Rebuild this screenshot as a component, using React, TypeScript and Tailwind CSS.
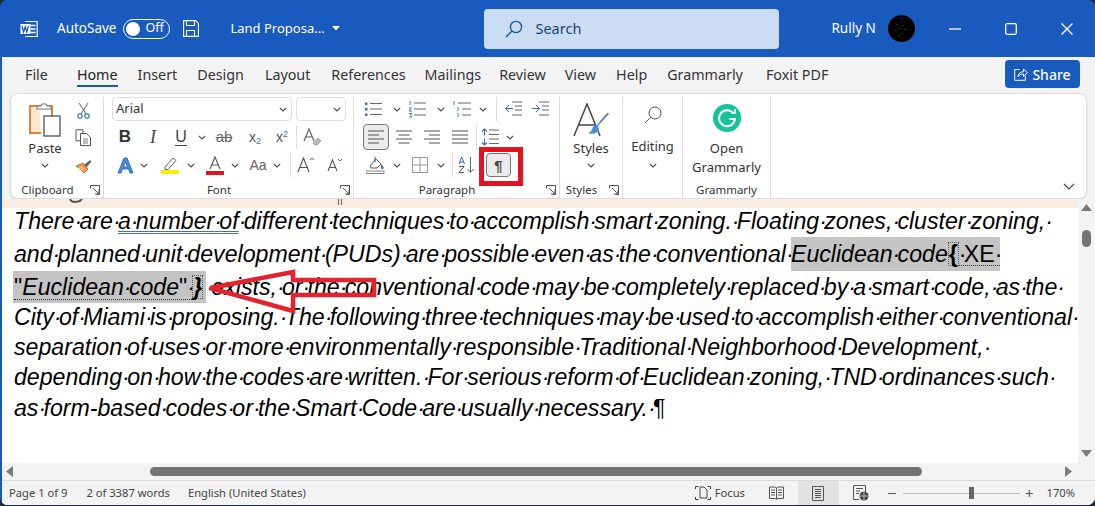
import React from "react";

const Chev = ({ c = "#444" }: { c?: string }) => (
  <svg width="8" height="5" viewBox="0 0 8 5"><path d="M.8.8 4 4l3.2-3.2" fill="none" stroke={c} strokeWidth="1.1" /></svg>
);

const Launcher = () => (
  <svg width="10" height="10" viewBox="0 0 10 10" fill="none" stroke="#555"><path d="M.5 3.5v-3h9v9h-3M3 3l6 6M9 5v4H5" strokeWidth="1" /></svg>
);

const Slot = ({ w, children }: { w: string; children?: React.ReactNode }) => (
  <div className={`flex h-full shrink-0 items-center justify-center ${w}`}>{children}</div>
);

const Sep = ({ m }: { m: string }) => <div className={`h-[24px] w-px shrink-0 bg-[#dcdcdc] ${m}`} />;

const Lines = ({ d }: { d: string }) => (
  <svg width="20" height="18" viewBox="0 0 20 18"><path d={d} fill="none" stroke="#555" strokeWidth="1.2" /></svg>
);

const GroupLabel = ({ label }: { label: string }) => (
  <div className="flex h-[18px] items-center pr-[3px]">
    <span className="flex-1 text-center text-[11.5px] leading-none text-[#333]">{label}</span>
    <div className="flex w-[16px] justify-end"><Launcher /></div>
  </div>
);

// show formatting marks: the dot takes the width of a space, not its own
const Marks = ({ t }: { t: string }) => (
  <>
    {t.split("·").map((w, i) => (
      <React.Fragment key={i}>
        {i > 0 && <span className="tracking-[-2.7px]">·</span>}
        {w}
      </React.Fragment>
    ))}
  </>
);

function TitleBar() {
  return (
    <div className="flex h-[57px] items-center bg-[#185abd] text-white">
      <svg className="ml-[20px] shrink-0" width="18" height="18" viewBox="0 0 18 18">
        <path d="M5 1.5h12.2v15H5" fill="none" stroke="#fff" strokeWidth="1.2" />
        <path d="M10.5 5.5h5M10.5 9h5M10.5 12.5h5" stroke="#fff" strokeWidth="1.4" />
        <rect x="0.5" y="4" width="10" height="10" fill="#fff" />
        <path d="M2 6l1.6 6 1.6-5 1.6 5L8.4 6" fill="none" stroke="#185abd" strokeWidth="1.3" />
      </svg>
      <span className="ml-[19px] text-[13.5px]">AutoSave</span>
      <div className="ml-[7px] flex h-[20px] w-[47px] items-center rounded-full border border-white pl-[2px]">
        <span className="size-[14px] rounded-full bg-white" />
        <span className="ml-[5px] text-[12.5px] leading-none">Off</span>
      </div>
      <svg className="ml-[13px] shrink-0" width="16" height="17" viewBox="0 0 16 17" fill="none" stroke="#fff" strokeWidth="1.1">
        <path d="M.6.6h12l2.8 2.8v13H.6zM3.5.8v4.7h8V.8M3.5 16v-5.5h8V16" />
      </svg>
      <span className="ml-[31px] w-[94px] whitespace-nowrap text-[13px]">Land Proposa...</span>
      <svg className="ml-[8px]" width="8" height="5" viewBox="0 0 8 5"><path d="M0 0h8L4 4.5z" fill="#fff" /></svg>
      <div className="ml-[144px] flex h-[40px] w-[295px] items-center rounded-[4px] bg-[#c9dcf2] text-[#21416f]">
        <svg className="ml-[21px]" width="18" height="18" viewBox="0 0 18 18" fill="none" stroke="#1f4f91" strokeWidth="1.3">
          <circle cx="11" cy="7" r="5.6" /><path d="M7 11l-6 6" />
        </svg>
        <span className="ml-[12px] text-[14.5px]">Search</span>
      </div>
      <span className="ml-[52px] text-[13.5px]">Rully N</span>
      <svg className="ml-[12px] shrink-0" width="27" height="27" viewBox="0 0 27 27">
        <circle cx="13.5" cy="13.5" r="13.5" fill="#000" />
        <path d="M13 3v1M9 9v1M15 10v1M12 13v1M17 14v1M8 15v1M14 18v1M11 20v1" stroke="#777" strokeWidth=".8" />
      </svg>
      <svg className="ml-[34px] shrink-0" width="12" height="2" viewBox="0 0 12 2"><path d="M0 1h12" stroke="#fff" strokeWidth="1.3" /></svg>
      <svg className="ml-[44px] shrink-0" width="12" height="12" viewBox="0 0 12 12"><rect x=".7" y=".7" width="10.6" height="10.6" rx="1.5" fill="none" stroke="#fff" strokeWidth="1.3" /></svg>
      <svg className="ml-[44px] shrink-0" width="12" height="12" viewBox="0 0 12 12"><path d="M.5.5l11 11M11.5.5l-11 11" stroke="#fff" strokeWidth="1.4" /></svg>
    </div>
  );
}

function TabRow() {
  return (
    <div className="flex h-[36px] items-start text-[14.3px] text-[#333]">
      <div className="ml-[23px] mt-[7px]">File</div>
      <div className="ml-[29px] mt-[7px] border-b-[2px] border-[#185abd] text-[#222]">Home</div>
      <div className="ml-[20px] mt-[7px]">Insert</div>
      <div className="ml-[20px] mt-[7px]">Design</div>
      <div className="ml-[21px] mt-[7px]">Layout</div>
      <div className="ml-[21px] mt-[7px]">References</div>
      <div className="ml-[19px] mt-[7px]">Mailings</div>
      <div className="ml-[18px] mt-[7px]">Review</div>
      <div className="ml-[19px] mt-[7px]">View</div>
      <div className="ml-[20px] mt-[7px]">Help</div>
      <div className="ml-[20px] mt-[7px]">Grammarly</div>
      <div className="ml-[23px] mt-[7px]">Foxit PDF</div>
      <div className="ml-auto mr-[15px] mt-[3px] flex h-[28px] w-[75px] items-center justify-center gap-[4px] rounded-[4px] bg-[#185abd] text-[14px] font-medium text-white">
        <svg width="14" height="14" viewBox="0 0 14 14" fill="none" stroke="#fff" strokeWidth="1"><path d="M5.5 2.5H.7v10.8h10.6V8.5M4 9.5c.3-3 2.5-4.8 5.5-4.8V2l4 3.7-4 3.7V7C7 7 5 8 4 9.500z" /></svg>
        Share
      </div>
    </div>
  );
}

function Clipboard() {
  return (
    <div className="w-[93px] shrink-0 border-r border-[#dcdcdc]">
      <div className="flex h-[84px]">
        <div className="ml-[9px] flex w-[50px] shrink-0 flex-col items-center pt-[5px]">
          <svg width="34" height="36" viewBox="0 0 34 36">
            <path d="M11 4h-9v27h11" fill="#fbe7d0" stroke="#d9823a" strokeWidth="2" />
            <path d="M11 4h13v10" fill="none" stroke="#d9823a" strokeWidth="2" />
            <path d="M9 7V4h4c0-3 6-3 6 0h4v3z" fill="#fff" stroke="#777" strokeWidth="1.1" />
            <rect x="16" y="14" width="16" height="20" fill="#fff" stroke="#444" strokeWidth="1.2" />
          </svg>
          <span className="text-[13px] leading-[20px] text-[#333]">Paste</span>
          <div className="mt-[5px] flex"><Chev /></div>
        </div>
        <div className="flex w-[26px] shrink-0 flex-col">
          <div className="flex h-[26px] items-center justify-center">
            <svg width="13" height="17" viewBox="0 0 13 17" fill="none"><path d="M2 1l7 11M11 1L4 12" stroke="#666" strokeWidth="1" /><circle cx="3" cy="14" r="2.2" stroke="#3b78b5" strokeWidth="1.2" /><circle cx="10" cy="14" r="2.2" stroke="#3b78b5" strokeWidth="1.2" /></svg>
          </div>
          <div className="mt-px flex h-[26px] items-center justify-center">
            <svg width="17" height="17" viewBox="0 0 17 17" fill="none" stroke="#555" strokeWidth="1"><path d="M1 .8h7v11H1z" /><path d="M5.500 4.500h6l4 4v8h-10z" fill="#fff" /><path d="M8 10h5M8 12h5M8 14h5" strokeWidth=".8" /></svg>
          </div>
          <div className="mt-[3px] flex h-[26px] items-center justify-center">
            <svg width="17" height="15" viewBox="0 0 17 15"><path d="M1 7l7-3 5 6-4 4z" fill="#ee9b52" stroke="#b8631f" strokeWidth=".8" /><path d="M3 10l4-2M5 12l4-3" stroke="#fff" strokeWidth=".8" /><path d="M9 6l6-5 1.500 1.500-5 6z" fill="#666" /></svg>
          </div>
        </div>
      </div>
      <GroupLabel label="Clipboard" />
    </div>
  );
}

function FontGroup() {
  return (
    <div className="w-[250px] shrink-0 border-r border-[#dcdcdc]">
      <div className="h-[84px]">
        <div className="ml-[8px] flex h-[24px] gap-[4px]">
          <div className="flex w-[180px] items-center justify-between rounded-[4px] border border-[#dedede] pl-[3px] pr-[4px] text-[13px] text-[#333]">
            Arial <Chev />
          </div>
          <div className="flex w-[50px] items-center justify-end rounded-[4px] border border-[#dedede] pr-[4px]"><Chev /></div>
        </div>
        <div className="mt-[3px] flex h-[26px] items-center pl-[7px] text-[#444]">
          <Slot w="w-[28px]"><span className="font-['Liberation_Sans',sans-serif] text-[17px] font-bold text-[#333]">B</span></Slot>
          <Slot w="w-[28px]"><span className="font-['Liberation_Serif',serif] text-[18px] italic">I</span></Slot>
          <Slot w="w-[28px]"><span className="border-b border-[#444] font-['Liberation_Sans',sans-serif] text-[16px] leading-[17px]">U</span></Slot>
          <Slot w="w-[14px]"><Chev /></Slot>
          <Slot w="w-[30px]"><span className="font-['Liberation_Sans',sans-serif] text-[15px] text-[#666] line-through">ab</span></Slot>
          <Slot w="w-[32px]"><span className="font-['Liberation_Sans',sans-serif] text-[14px] text-[#555]">x<sub className="text-[9px] text-[#3b78b5]">2</sub></span></Slot>
          <Slot w="w-[22px]"><span className="font-['Liberation_Sans',sans-serif] text-[14px] text-[#555]">x<sup className="text-[9px] text-[#3b78b5]">2</sup></span></Slot>
          <Sep m="ml-[3px]" />
          <Slot w="w-[30px]">
            <svg width="19" height="19" viewBox="0 0 19 19"><path d="M1 13L6 1l5 12M3 9h6" fill="none" stroke="#555" strokeWidth="1.1" /><path d="M10 15l5-5 3 3-4 4h-2z" fill="#bbb" stroke="#888" strokeWidth=".6" /></svg>
          </Slot>
        </div>
        <div className="mt-[2px] flex h-[26px] items-center pl-[7px]">
          <Slot w="w-[28px]">
            <svg width="17" height="17" viewBox="0 0 17 17"><path d="M1 16L7 1h3l6 15h-3l-1.500-4h-6L4 16zM6.500 10h4L8.500 4.500z" fill="#4a90d9" stroke="#1f5da8" strokeWidth=".8" /></svg>
          </Slot>
          <Slot w="w-[10px]"><Chev /></Slot>
          <div className="ml-[6px] flex h-full"><Slot w="w-[30px]">
            <svg width="20" height="18" viewBox="0 0 20 18"><path d="M5 11l8-9 3 2.500-8 9H5z" fill="#fff" stroke="#666" /><rect x="1" y="14" width="18" height="4" fill="#f6f000" /></svg>
          </Slot></div>
          <Slot w="w-[12px]"><Chev /></Slot>
          <div className="ml-[3px] flex h-full"><Slot w="w-[30px]">
            <svg width="18" height="19" viewBox="0 0 18 19"><path d="M4 13L9 1l5 12M5.500 9h7" fill="none" stroke="#555" strokeWidth="1.1" /><rect y="15" width="18" height="4" fill="#e0161e" /></svg>
          </Slot></div>
          <Slot w="w-[10px]"><Chev /></Slot>
          <div className="ml-[3px] flex h-full"><Slot w="w-[30px]"><span className="font-['Liberation_Sans',sans-serif] text-[14px] text-[#666]">Aa</span></Slot></div>
          <Slot w="w-[8px]"><Chev /></Slot>
          <Sep m="ml-[9px]" />
          <Slot w="w-[30px]">
            <svg width="18" height="16" viewBox="0 0 18 16"><path d="M1 15L6.500 1 12 15M3 10.500h7" fill="none" stroke="#555" strokeWidth="1.1" /><path d="M13 3l2-2 2 2" fill="none" stroke="#3b78b5" /></svg>
          </Slot>
          <Slot w="w-[28px]">
            <svg width="16" height="14" viewBox="0 0 16 14"><path d="M1 13L5.500 2 10 13M2.500 9.500h6" fill="none" stroke="#555" strokeWidth="1.1" /><path d="M11 1l2 2 2-2" fill="none" stroke="#3b78b5" /></svg>
          </Slot>
        </div>
      </div>
      <GroupLabel label="Font" />
    </div>
  );
}

function ParagraphGroup() {
  return (
    <div className="w-[206px] shrink-0 border-r border-[#dcdcdc]">
      <div className="h-[84px]">
        <div className="flex h-[24px] items-center pl-[7px]">
          <Slot w="w-[24px]">
            <svg width="18" height="16" viewBox="0 0 18 16"><path d="M6 2.500h12M6 8h12M6 13.500h12" stroke="#666" strokeWidth="1" /><path d="M1 1.500h2.500V4H1zM1 7h2.500v2.500H1zM1 12.500h2.500V15H1z" fill="#2f6fb5" /></svg>
          </Slot>
          <div className="ml-[4px] flex h-full"><Slot w="w-[16px]"><Chev /></Slot></div>
          <Slot w="w-[24px]">
            <svg width="18" height="18" viewBox="0 0 18 18"><path d="M6 3h12M6 9h12M6 15h12" stroke="#666" strokeWidth="1" /><path d="M2 1v4M1 8h2.500L1 11h3M1 13.500h3l-1.500 1.500L4 17H1" fill="none" stroke="#2f6fb5" strokeWidth=".9" /></svg>
          </Slot>
          <div className="ml-[6px] flex h-full"><Slot w="w-[12px]"><Chev /></Slot></div>
          <div className="ml-[3px] flex h-full"><Slot w="w-[24px]">
            <svg width="18" height="18" viewBox="0 0 18 18"><path d="M5 3h13M9 9h9M9 15h9" stroke="#666" strokeWidth="1" /><path d="M1 1v4M5 7v4M5 13v4" stroke="#2f6fb5" strokeWidth=".9" /></svg>
          </Slot></div>
          <div className="ml-[3px] flex h-full"><Slot w="w-[12px]"><Chev /></Slot></div>
          <Sep m="ml-[7px]" />
          <div className="ml-[4px] flex h-full"><Slot w="w-[24px]">
            <svg width="18" height="16" viewBox="0 0 18 16"><path d="M8 1h10M11 5h7M11 9h7M8 14h10" stroke="#666" strokeWidth="1" /><path d="M9 7.500H1.500M5 4L1.500 7.500 5 11" fill="none" stroke="#2f6fb5" strokeWidth="1" /></svg>
          </Slot></div>
          <div className="ml-[3px] flex h-full"><Slot w="w-[24px]">
            <svg width="18" height="16" viewBox="0 0 18 16"><path d="M8 1h10M11 5h7M11 9h7M8 14h10" stroke="#666" strokeWidth="1" /><path d="M1 7.500h7.500M5 4l3.500 3.500L5 11" fill="none" stroke="#2f6fb5" strokeWidth="1" /></svg>
          </Slot></div>
        </div>
        <div className="mt-[3px] flex h-[26px] items-center pl-[9px]">
          <div className="flex h-[26px] w-[26px] shrink-0 items-center justify-center rounded-[4px] border border-[#777] bg-[#ececec]">
            <Lines d="M2 3h16M2 7h11M2 11h16M2 15h11" />
          </div>
          <div className="ml-px flex h-full"><Slot w="w-[28px]"><Lines d="M2 3h16M4.500 7h11M2 11h16M4.500 15h11" /></Slot></div>
          <Slot w="w-[28px]"><Lines d="M2 3h16M7 7h11M2 11h16M7 15h11" /></Slot>
          <Slot w="w-[28px]"><Lines d="M2 3h16M2 7h16M2 11h16M2 15h16" /></Slot>
          <Sep m="ml-[2px]" />
          <div className="ml-px flex h-full"><Slot w="w-[24px]">
            <svg width="18" height="18" viewBox="0 0 18 18"><path d="M8 2h10M8 6.500h10M8 11h10M8 15.500h10" stroke="#666" strokeWidth="1" /><path d="M3.500 1v6.500M1 3.500L3.500 1 6 3.500M3.500 10.500V17M1 14.500L3.500 17 6 14.500" fill="none" stroke="#2f6fb5" strokeWidth="1.100" /></svg>
          </Slot></div>
          <div className="ml-[2px] flex h-full"><Slot w="w-[12px]"><Chev /></Slot></div>
        </div>
        <div className="mt-[2px] flex h-[26px] items-center pl-[7px]">
          <Slot w="w-[28px]">
            <svg width="19" height="18" viewBox="0 0 19 18"><path d="M4 10l6-7 5 5-4 4H5z" fill="#fff" stroke="#555" /><path d="M9 1v5" stroke="#555" /><path d="M15 8c2 2 3 3 2.500 4.500S15 13 15 11.500z" fill="#2f6fb5" /><path d="M0 15h18v2.500H0z" fill="#fff" stroke="#777" strokeWidth=".9" /></svg>
          </Slot>
          <div className="ml-[2px] flex h-full"><Slot w="w-[12px]"><Chev /></Slot></div>
          <div className="ml-[3px] flex h-full"><Slot w="w-[28px]">
            <svg width="16" height="16" viewBox="0 0 16 16" fill="none" stroke="#999" strokeWidth="1"><path d="M.5.500h15v15H.500zM8 .5v15M.5 8h15" /></svg>
          </Slot></div>
          <div className="ml-px flex h-full"><Slot w="w-[12px]"><Chev /></Slot></div>
          <Sep m="ml-[5px]" />
          <Slot w="w-[26px]">
            <svg width="17" height="18" viewBox="0 0 17 18"><path d="M1 8l2.700-7L6.500 8M1.800 6h4" fill="none" stroke="#2f6fb5" strokeWidth="1" /><path d="M1 10.500h5L1 16.500h5" fill="none" stroke="#555" strokeWidth="1" /><path d="M12.500 1v15M9.500 13l3 3.500 3-3.500" fill="none" stroke="#666" strokeWidth="1" /></svg>
          </Slot>
          <div className="mt-[3px] h-[39px] w-[44px] shrink-0 border-[5px] border-[#e3141f] pl-[2px] pt-px">
            <div className="flex h-[24px] w-[25px] items-center justify-center rounded-[4px] border border-[#777] bg-[#ececec] font-['Liberation_Sans',sans-serif] text-[15px] font-bold leading-none text-[#444]">¶</div>
          </div>
        </div>
      </div>
      <GroupLabel label="Paragraph" />
    </div>
  );
}

function ToolGroups() {
  return (
    <>
      <div className="w-[63px] shrink-0 border-r border-[#dcdcdc]">
        <div className="flex h-[84px] flex-col items-center pt-[6px]">
          <svg width="38" height="36" viewBox="0 0 38 36"><path d="M2 33L15 1l13 32M7 22h17" fill="none" stroke="#444" strokeWidth="1.500" /><path d="M36 10L25 22c-2-1-3 0-4 2-1 3-2 5-5 6 5 2 10 0 11-4l-1-3 11-12z" fill="#4a90d9" /><path d="M36 10l-8 9" stroke="#888" strokeWidth="1.500" /></svg>
          <span className="-mt-px text-[13px] leading-[20px] text-[#333]">Styles</span>
          <div className="mt-[5px] flex"><Chev /></div>
        </div>
        <GroupLabel label="Styles" />
      </div>
      <div className="flex h-[102px] w-[60px] shrink-0 flex-col items-center border-r border-[#dcdcdc] pt-[8px]">
        <svg width="20" height="20" viewBox="0 0 20 20" fill="none" stroke="#555" strokeWidth="1"><circle cx="12" cy="8" r="6" /><path d="M8 12l-6 6" /></svg>
        <span className="mt-[11px] text-[13px] leading-[20px] text-[#333]">Editing</span>
        <div className="mt-[7px] flex"><Chev /></div>
      </div>
      <div className="flex h-[102px] w-[88px] shrink-0 flex-col items-center border-r border-[#dcdcdc] pt-[7px]">
        <svg width="28" height="28" viewBox="0 0 28 28">
          <circle cx="14" cy="14" r="14" fill="#15c39a" />
          <path d="M20.500 9.500A8 8 0 1 0 22 15h-6" fill="none" stroke="#fff" strokeWidth="2" />
          <path d="M18 9h4V5" fill="none" stroke="#fff" strokeWidth="1.500" />
        </svg>
        <span className="mt-[7px] text-[13px] leading-[19px] text-[#333]">Open</span>
        <span className="text-[13px] leading-[19px] text-[#333]">Grammarly</span>
        <span className="mt-[7px] text-[11.5px] leading-none text-[#333]">Grammarly</span>
      </div>
      <div className="flex flex-1 items-end justify-end pb-[8px] pr-[11px]">
        <svg width="12" height="7" viewBox="0 0 12 7"><path d="M1 1l5 5 5-5" fill="none" stroke="#444" strokeWidth="1.200" /></svg>
      </div>
    </>
  );
}

function Ribbon() {
  return (
    <div className="mx-[8px] flex h-[106px] rounded-[8px] border border-[#dedede] bg-white pt-[3px] shadow-[0_1px_2px_rgba(0,0,0,0.12)]">
      <Clipboard />
      <FontGroup />
      <ParagraphGroup />
      <ToolGroups />
    </div>
  );
}

function Doc() {
  return (
    <div className="flex min-h-0 flex-1">
      <div className="w-[1076px] shrink-0 bg-white">
        <div className="flex h-[9px] items-start bg-[#f9ede1]">
          <svg className="ml-[67px]" width="14" height="5" viewBox="0 0 14 5"><path d="M1 0c1 4 11 4 12-1" fill="none" stroke="#555" strokeWidth="2" /></svg>
          <svg className="ml-[254px]" width="6" height="6" viewBox="0 0 6 6"><path d="M1.500 0v6M4.500 0v6" stroke="#777" strokeWidth="1.200" /></svg>
        </div>
        <div className="whitespace-nowrap pl-[12px] font-['Liberation_Sans',Arial,sans-serif] text-[23.15px] italic text-black">
          <div className="flex h-[29px] items-center pb-[3px]">
            <span><Marks t="There·are·" /><span className="underline decoration-double decoration-[#3f74b5] decoration-1 underline-offset-2"><Marks t="a·number·of" /></span><Marks t="·different·techniques·to·accomplish·smart·zoning.·Floating·zones,·cluster·zoning,·" /></span>
          </div>
          <div className="flex h-[34px] items-center">
            <span><Marks t="and·planned·unit·development·(PUDs)·are·possible·even·as·the·conventional·" /></span>
            <span className="flex h-full items-center bg-[#c4c4c4]">
              <span><Marks t="Euclidean·code" /></span>
              <span className="border border-dotted border-[#555] font-bold not-italic leading-[22px]">{"{"}</span>
              <span className="border-b border-dotted border-[#333] not-italic leading-[22px]"><Marks t="·XE·" /></span>
            </span>
          </div>
          <div className="-ml-px flex h-[32px] items-center">
            <span className="flex h-full items-center bg-[#c4c4c4] pl-px pr-[3px]">
              <span className="border-b border-dotted border-[#333] leading-[24px]"><span className="not-italic">"</span><Marks t="Euclidean·code" /><span className="not-italic">"</span><Marks t="·" /></span>
              <span className="border border-dotted border-[#555] font-bold leading-[22px]">{"}"}</span>
            </span>
            <span><Marks t="·exists,·or·the·conventional·code·may·be·completely·replaced·by·a·smart·code,·as·the·" /></span>
          </div>
          <div className="h-[29px] leading-[29px]"><Marks t="City·of·Miami·is·proposing.·The·following·three·techniques·may·be·used·to·accomplish·either·conventional·" /></div>
          <div className="h-[30px] leading-[30px]"><Marks t="separation·of·uses·or·more·environmentally·responsible·Traditional·Neighborhood·Development,·" /></div>
          <div className="h-[31px] leading-[31px]"><Marks t="depending·on·how·the·codes·are·written.·For·serious·reform·of·Euclidean·zoning,·TND·ordinances·such·" /></div>
          <div className="h-[30px] leading-[30px]"><Marks t="as·form-based·codes·or·the·Smart·Code·are·usually·necessary.·" /><span className="not-italic">¶</span></div>
        </div>
      </div>
      <div className="flex flex-1 flex-col items-center bg-[#f3f3f3] pb-[6px] pt-[5px]">
        <svg width="11" height="7" viewBox="0 0 11 7"><path d="M5.500 0L11 7H0z" fill="#7a7a7a" /></svg>
        <div className="mt-[19px] h-[17px] w-[9px] rounded-full bg-[#747474]" />
        <svg className="mt-auto" width="11" height="7" viewBox="0 0 11 7"><path d="M5.500 7L11 0H0z" fill="#7a7a7a" /></svg>
      </div>
    </div>
  );
}

function HScroll() {
  return (
    <div className="flex h-[17px] items-center bg-[#f3f3f3]">
      <svg className="ml-[4px]" width="7" height="11" viewBox="0 0 7 11"><path d="M0 5.500L7 0v11z" fill="#7a7a7a" /></svg>
      <div className="ml-[137px] h-[9px] w-[772px] rounded-full bg-[#747474]" />
      <svg className="ml-[143px]" width="7" height="11" viewBox="0 0 7 11"><path d="M7 5.500L0 0v11z" fill="#7a7a7a" /></svg>
    </div>
  );
}

function StatusBar() {
  return (
    <div className="flex h-[25px] items-center border-t border-[#d9d9d9] bg-[#f3f3f3] text-[11.2px] text-[#444]">
      <span className="ml-[7px]">Page 1 of 9</span>
      <span className="ml-[19px]">2 of 3387 words</span>
      <span className="ml-[18px]">English (United States)</span>
      <svg className="ml-auto" width="16" height="16" viewBox="0 0 16 16" fill="none" stroke="#444" strokeWidth="1"><path d="M.5 4V1.500h3M15.500 4V1.500h-3M.5 12v2.500h3M15.500 12v2.500h-3M5 2h4l3 3v8H5z" /></svg>
      <span className="ml-[4px]">Focus</span>
      <svg className="ml-[24px]" width="15" height="14" viewBox="0 0 15 14" fill="none" stroke="#555" strokeWidth="1"><path d="M.5 1h5.500l1.500 1 1.500-1h5.500v11.500h-5.500l-1.500 1-1.500-1H.5zM7.500 2v11M2 4h4M2 6.500h4M2 9h4M9 4h4M9 6.500h4M9 9h4" /></svg>
      <div className="ml-[14px] flex h-full w-[41px] items-center justify-center bg-[#e2e2e2]">
        <svg width="12" height="15" viewBox="0 0 12 15" fill="none" stroke="#555" strokeWidth="1"><path d="M.5.500h11v14H.500zM3 3.500h6M3 5.500h6M3 7.500h6M3 9.500h6M3 11.500h6" /></svg>
      </div>
      <svg className="ml-[14px]" width="16" height="16" viewBox="0 0 16 16"><path d="M.5.500h12V8M6 14.500H.500V.500" fill="none" stroke="#555" /><path d="M3 3.500h7M3 6h4M3 8.500h3" stroke="#555" /><circle cx="11" cy="11" r="4.500" fill="#444" /><path d="M6.500 11h9M11 6.500v9" stroke="#ddd" strokeWidth=".8" /></svg>
      <div className="ml-[19px] h-px w-[8px] bg-[#555]" />
      <div className="ml-[7px] flex w-[117px] items-center">
        <div className="h-px flex-1 bg-[#bbb]" />
        <div className="h-[12px] w-[5px] bg-[#666]" />
        <div className="h-px w-[46px] bg-[#bbb]" />
      </div>
      <span className="ml-[5px] text-[15px] leading-none text-[#555]">+</span>
      <span className="ml-[13px] mr-[20px]">170%</span>
    </div>
  );
}

export default function App() {
  return (
    <div className="relative h-[506px] w-[1095px] overflow-hidden bg-[#1b2d44] font-['Noto_Sans',sans-serif]">
      <div className="flex h-[505px] flex-col overflow-hidden rounded-[8px] bg-[#185abd]">
        <TitleBar />
        <div className="ml-[2px] flex min-h-0 flex-1 flex-col bg-[#f3f3f3]">
          <TabRow />
          <Ribbon />
          <Doc />
          <HScroll />
          <StatusBar />
        </div>
      </div>
      <svg className="pointer-events-none absolute left-[205px] top-[268px]" width="175" height="46" viewBox="0 0 175 46">
        <path d="M5 20L88 4v8h81v15H88v16z" fill="none" stroke="#e3242f" strokeWidth="4.500" />
      </svg>
    </div>
  );
}
